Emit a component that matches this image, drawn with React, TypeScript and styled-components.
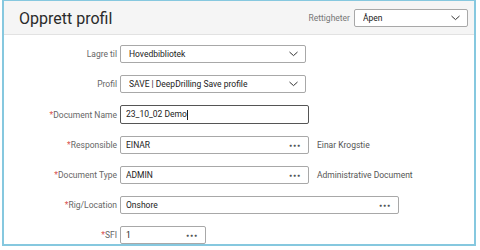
import styled, { createGlobalStyle } from "styled-components";

const Global = createGlobalStyle`
  html, body {
    margin: 0;
    padding: 0;
    background: #ffffff;
    font-family: Roboto, "Liberation Sans", sans-serif;
  }
`;

const Frame = styled.div`
  margin-left: 2px;
  width: 470px;
  height: 243px;
  border: 2px solid #86c8df;
  border-top-width: 1px;
  background: #fff;
  overflow: hidden;
  display: flex;
  flex-direction: column;
`;

const Header = styled.div`
  height: 33px;
  flex: none;
  background: #f5f5f5;
  border-bottom: 1px solid #e2e2e2;
  display: flex;
  align-items: center;
  padding: 0 6px 0 15px;
`;

const Title = styled.div`
  font-size: 16px;
  color: #2a2a2a;
  flex: 1;
  padding-top: 1px;
`;

const SmallLabel = styled.span`
  font-size: 8.5px;
  color: #777;
  margin-right: 4px;
  margin-top: 1px;
`;

const Body = styled.div`
  padding: 10px 0 0 0;
  display: flex;
  flex-direction: column;
  gap: 12px;
`;

const Row = styled.div<{ $h?: number }>`
  display: flex;
  align-items: center;
  height: ${(p) => p.$h ?? 18}px;
`;

const Label = styled.label`
  width: 113px;
  margin-right: 3px;
  text-align: right;
  font-size: 8.5px;
  color: #666;
`;

const Req = styled.span`
  color: #d9534f;
`;

const Box = styled.div<{ $w: number; $h?: number; $focus?: boolean; $select?: boolean }>`
  width: ${(p) => p.$w}px;
  height: ${(p) => p.$h ?? 18}px;
  box-sizing: border-box;
  border: ${(p) => (p.$focus ? "1.5px solid #555" : "1px solid #a8a8a8")};
  border-radius: 2px;
  background: #fff;
  display: flex;
  align-items: center;
  padding: 0 7px 0 ${(p) => (p.$select ? 8 : 5)}px;
  font-size: 8.5px;
  color: #222;
  flex: none;
`;

const Value = styled.span`
  flex: 1;
  white-space: nowrap;
  overflow: hidden;
`;

const Caret = styled.span`
  display: inline-block;
  width: 1px;
  height: 10px;
  background: #222;
  vertical-align: middle;
`;

const Dots = styled.span`
  font-size: 5px;
  letter-spacing: 1px;
  color: #555;
`;

const Side = styled.span`
  margin-left: 8px;
  font-size: 8.5px;
  color: #555;
`;

const Chevron = () => (
  <svg width="9" height="6" viewBox="0 0 9 6">
    <path d="M0.5 1 L4.5 4.6 L8.5 1" fill="none" stroke="#333" strokeWidth="1" />
  </svg>
);

const Lookup = () => <Dots>●●●</Dots>;

export default function App() {
  return (
    <>
      <Global />
      <Frame>
        <Header>
          <Title>Opprett profil</Title>
          <SmallLabel>Rettigheter</SmallLabel>
          <Box $w={114} $select>
            <Value>Åpen</Value>
            <Chevron />
          </Box>
        </Header>
        <Body>
          <Row>
            <Label>Lagre til</Label>
            <Box $w={186} $select>
              <Value>Hovedbibliotek</Value>
              <Chevron />
            </Box>
          </Row>
          <Row>
            <Label>Profil</Label>
            <Box $w={186} $select>
              <Value>SAVE | DeepDrilling Save profile</Value>
              <Chevron />
            </Box>
          </Row>
          <Row $h={19}>
            <Label><Req>*</Req>Document Name</Label>
            <Box $w={189} $h={19} $focus>
              <Value>23_10_02 Demo<Caret /></Value>
            </Box>
          </Row>
          <Row>
            <Label><Req>*</Req>Responsible</Label>
            <Box $w={189}>
              <Value>EINAR</Value>
              <Lookup />
            </Box>
            <Side>Einar Krogstie</Side>
          </Row>
          <Row>
            <Label><Req>*</Req>Document Type</Label>
            <Box $w={189}>
              <Value>ADMIN</Value>
              <Lookup />
            </Box>
            <Side>Administrative Document</Side>
          </Row>
          <Row>
            <Label><Req>*</Req>Rig/Location</Label>
            <Box $w={279}>
              <Value>Onshore</Value>
              <Lookup />
            </Box>
          </Row>
          <Row>
            <Label><Req>*</Req>SFI</Label>
            <Box $w={86}>
              <Value>1</Value>
              <Lookup />
            </Box>
          </Row>
        </Body>
      </Frame>
    </>
  );
}
